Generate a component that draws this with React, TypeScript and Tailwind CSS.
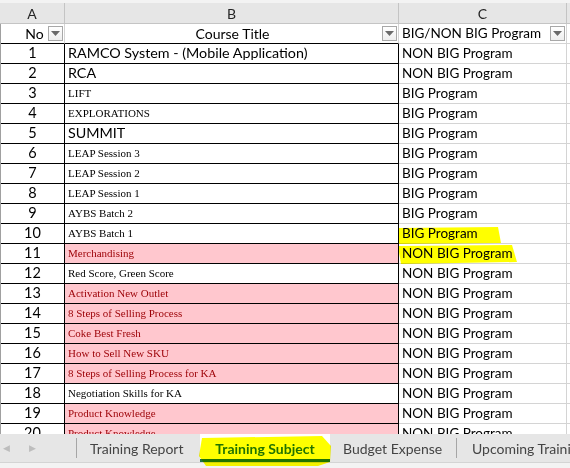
import React from 'react'

type Row = { no: number; title: string; program: string; serif?: boolean; pink?: boolean }

const rows: Row[] = [
  { no: 1, title: 'RAMCO System - (Mobile Application)', program: 'NON BIG Program' },
  { no: 2, title: 'RCA', program: 'NON BIG Program' },
  { no: 3, title: 'LIFT', program: 'BIG Program', serif: true },
  { no: 4, title: 'EXPLORATIONS', program: 'BIG Program', serif: true },
  { no: 5, title: 'SUMMIT', program: 'BIG Program' },
  { no: 6, title: 'LEAP Session 3', program: 'BIG Program', serif: true },
  { no: 7, title: 'LEAP Session 2', program: 'BIG Program', serif: true },
  { no: 8, title: 'LEAP Session 1', program: 'BIG Program', serif: true },
  { no: 9, title: 'AYBS Batch 2', program: 'BIG Program', serif: true },
  { no: 10, title: 'AYBS Batch 1', program: 'BIG Program', serif: true },
  { no: 11, title: 'Merchandising', program: 'NON BIG Program', serif: true, pink: true },
  { no: 12, title: 'Red Score, Green Score', program: 'NON BIG Program', serif: true },
  { no: 13, title: 'Activation New Outlet', program: 'NON BIG Program', serif: true, pink: true },
  { no: 14, title: '8 Steps of Selling Process', program: 'NON BIG Program', serif: true, pink: true },
  { no: 15, title: 'Coke Best Fresh', program: 'NON BIG Program', serif: true, pink: true },
  { no: 16, title: 'How to Sell New SKU', program: 'NON BIG Program', serif: true, pink: true },
  { no: 17, title: '8 Steps of Selling Process for KA', program: 'NON BIG Program', serif: true, pink: true },
  { no: 18, title: 'Negotiation Skills for KA', program: 'NON BIG Program', serif: true },
  { no: 19, title: 'Product Knowledge', program: 'NON BIG Program', serif: true, pink: true },
  { no: 20, title: 'Product Knowledge', program: 'NON BIG Program', serif: true, pink: true },
]

const sans = "font-['Lato','Liberation_Sans',sans-serif]"
const serif = "font-['Liberation_Serif','Times_New_Roman',serif]"

function FilterButton() {
  return (
    <div className="flex h-[15px] w-[15px] items-center justify-center border border-[#a8a8a8] bg-gradient-to-b from-white to-[#eeeeee]">
      <svg width="9" height="5" viewBox="0 0 9 5">
        <path d="M0 0h9L4.5 5z" fill="#6a6a6a" />
      </svg>
    </div>
  )
}

export default function App() {
  return (
    <div className={`relative h-[468px] w-[570px] overflow-hidden bg-white ${sans}`}>
      {/* column letters */}
      <div className="flex h-[24px] border-b border-[#c4c4c4] border-t-[3px] border-t-[#f3f3f3] bg-[#e6e6e6] text-[14px] text-[#262626]">
        <div className="flex w-[65px] items-center justify-center border-r border-[#c4c4c4]">A</div>
        <div className="flex w-[334px] items-center justify-center border-r border-[#c4c4c4]">B</div>
        <div className="flex w-[168px] items-center justify-center border-r border-[#c4c4c4]">C</div>
        <div className="flex-1" />
      </div>

      <div className="h-[410px] overflow-hidden border-l border-[#a0a0a0]">
        {/* table header row */}
        <div className="flex h-[20px] text-[14px] text-black">
          <div className="flex w-[64px] items-center border-r border-b border-r-[#d4d4d4] border-b-black">
            <span className="flex-1 pl-[20px] text-center leading-none">No</span>
            <span className="mr-[1px]"><FilterButton /></span>
          </div>
          <div className="flex w-[334px] items-center border-r border-b border-r-[#d4d4d4] border-b-black">
            <span className="flex-1 pl-[18px] text-center leading-none">Course Title</span>
            <span className="mr-[1px]"><FilterButton /></span>
          </div>
          <div className="flex w-[168px] items-center border-r border-b border-[#d4d4d4]">
            <span className="flex-1 whitespace-nowrap pl-[3px] text-[13.5px] leading-none">BIG/NON BIG Program</span>
            <span className="mr-[1px]"><FilterButton /></span>
          </div>
          <div className="flex-1 border-b border-[#d4d4d4]" />
        </div>

        {rows.map((r) => (
          <div key={r.no} className="flex h-[20px]">
            <div className="flex w-[64px] items-center justify-center border-r border-b border-black text-[14.5px] leading-none text-black">
              {r.no}
            </div>
            <div
              className={`flex w-[334px] items-center whitespace-nowrap border-r border-b border-black pl-[3px] leading-none ${
                r.pink ? 'bg-[#ffc7ce] text-[#9c0006]' : 'text-black'
              } ${r.serif ? `${serif} text-[11px]` : 'text-[14.3px]'}`}
            >
              {r.title}
            </div>
            <div className="flex w-[168px] items-center whitespace-nowrap border-r border-b border-[#d4d4d4] pl-[3px] text-[13.5px] leading-none text-black">
              {r.program}
            </div>
            <div className="flex-1 border-b border-[#d4d4d4]" />
          </div>
        ))}
      </div>

      {/* sheet tabs */}
      <div className="flex h-[28px] items-stretch bg-[#e6e6e6] text-[14px] text-[#444]">
        <div className="flex w-[76px] items-center gap-[19px] pl-[3px] text-[9px] text-[#bdbdbd]">
          <span>◀</span>
          <span>▶</span>
        </div>
        <div className="my-[4px] w-px bg-[#a6a6a6]" />
        <div className="flex w-[123px] items-center whitespace-nowrap pl-[13px]">Training Report</div>
        <div className="flex w-[130px] items-center justify-center whitespace-nowrap border-b-[3px] border-[#217346] bg-white pt-[3px] font-bold text-[#217346]">
          Training Subject
        </div>
        <div className="flex w-[126px] items-center whitespace-nowrap pl-[13px]">Budget Expense</div>
        <div className="my-[4px] w-px bg-[#a6a6a6]" />
        <div className="flex flex-1 items-center overflow-hidden whitespace-nowrap pl-[15px]">Upcoming Training</div>
      </div>
      <div className="h-[6px] border-t border-[#d4d4d4] bg-[#f3f3f3]" />

      {/* highlighter marks */}
      <svg className="pointer-events-none absolute left-0 top-0 mix-blend-multiply" width="570" height="468">
        <path d="M398 228 L498 227 L501 243 L399 244 Z" fill="#ffff00" />
        <path d="M398 246 L512 245 L517 262 L401 264 Z" fill="#ffff00" />
        <path d="M202 438 L322 436 L331 446 L330 462 L318 466 L206 466 L199 456 Z" fill="#ffff00" />
      </svg>
    </div>
  )
}
